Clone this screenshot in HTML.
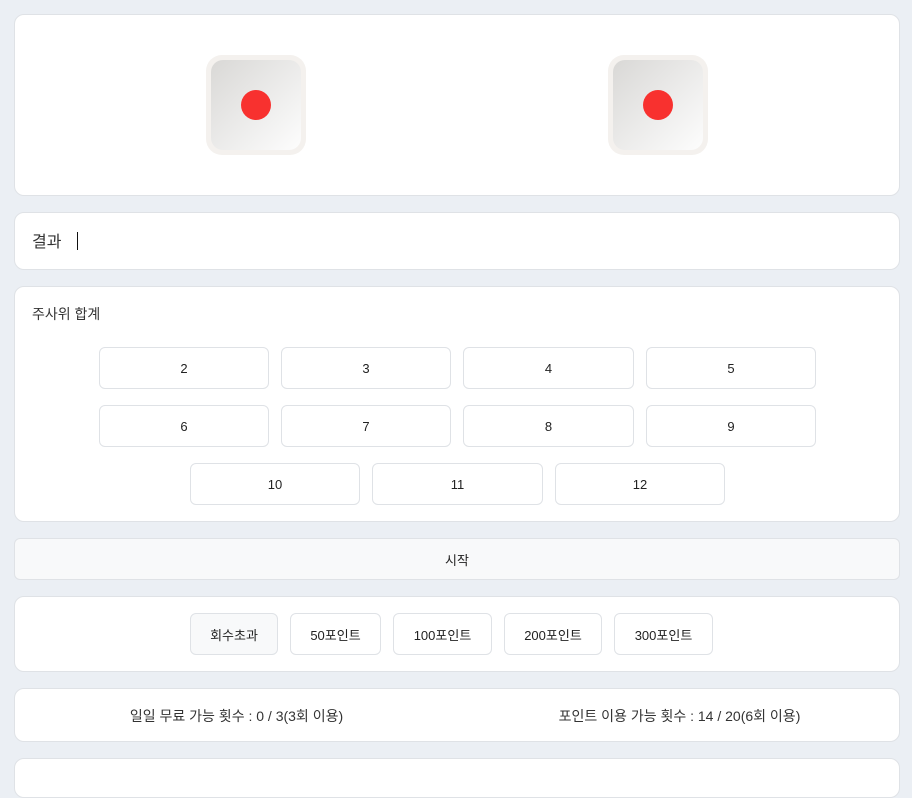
<!DOCTYPE html>
<html><head><meta charset="utf-8"><style>
*{box-sizing:border-box;margin:0;padding:0}
body{width:912px;height:763px;overflow:hidden;background:#ebeff4;font-family:"Liberation Sans","Noto Sans CJK KR",sans-serif;color:#222;position:relative}
.card{position:absolute;left:14px;width:886px;background:#fff;border:1px solid #dfe2e6;border-radius:10px}
.die{position:absolute;top:55px;width:100px;height:100px;border-radius:16px;background:#f4f1ee;padding:5px}
.die .f{width:100%;height:100%;border-radius:12px;background:linear-gradient(135deg,#d9d8d6,#fdfdfd);position:relative}
.die .f:after{content:"";position:absolute;left:30px;top:30px;width:30px;height:30px;border-radius:50%;background:#f8312f}
.b{position:absolute;height:42px;border:1px solid #dfe2e6;border-radius:6px;background:#fff;font-size:13px;display:flex;align-items:center;justify-content:center}
</style></head><body>
<div class="card" style="top:14px;height:182px"></div>
<div class="die" style="left:206px"><div class="f"></div></div>
<div class="die" style="left:608px"><div class="f"></div></div>

<div class="card" style="top:212px;height:58px">
<span style="position:absolute;left:17px;top:15px;font-size:16px;color:#333">결과</span>
<span style="position:absolute;left:62px;top:19px;width:1px;height:18px;background:#111"></span>
</div>

<div class="card" style="top:286px;height:236px">
<span style="position:absolute;left:17px;top:17px;font-size:14px;color:#333">주사위 합계</span>
</div>
<div class="b" style="left:99px;top:347px;width:170px">2</div>
<div class="b" style="left:281px;top:347px;width:170px">3</div>
<div class="b" style="left:463px;top:347px;width:171px">4</div>
<div class="b" style="left:646px;top:347px;width:170px">5</div>
<div class="b" style="left:99px;top:405px;width:170px">6</div>
<div class="b" style="left:281px;top:405px;width:170px">7</div>
<div class="b" style="left:463px;top:405px;width:171px">8</div>
<div class="b" style="left:646px;top:405px;width:170px">9</div>
<div class="b" style="left:190px;top:463px;width:170px">10</div>
<div class="b" style="left:372px;top:463px;width:171px">11</div>
<div class="b" style="left:555px;top:463px;width:170px">12</div>

<div class="card" style="top:538px;height:42px;background:#f8f9fa;border-radius:6px;display:flex;align-items:center;justify-content:center;font-size:13px">시작</div>

<div class="card" style="top:596px;height:76px"></div>
<div class="b" style="left:190px;top:613px;width:88px;background:#f8f9fa">회수초과</div>
<div class="b" style="left:290px;top:613px;width:91px">50포인트</div>
<div class="b" style="left:393px;top:613px;width:99px">100포인트</div>
<div class="b" style="left:504px;top:613px;width:98px">200포인트</div>
<div class="b" style="left:614px;top:613px;width:99px">300포인트</div>

<div class="card" style="top:688px;height:54px;font-size:14px;color:#333">
<span style="position:absolute;left:0;width:443px;top:17px;text-align:center">일일 무료 가능 횟수 : 0 / 3(3회 이용)</span>
<span style="position:absolute;left:443px;width:443px;top:17px;text-align:center">포인트 이용 가능 횟수 : 14 / 20(6회 이용)</span>
</div>
<div class="card" style="top:758px;height:40px"></div>
</body></html>
